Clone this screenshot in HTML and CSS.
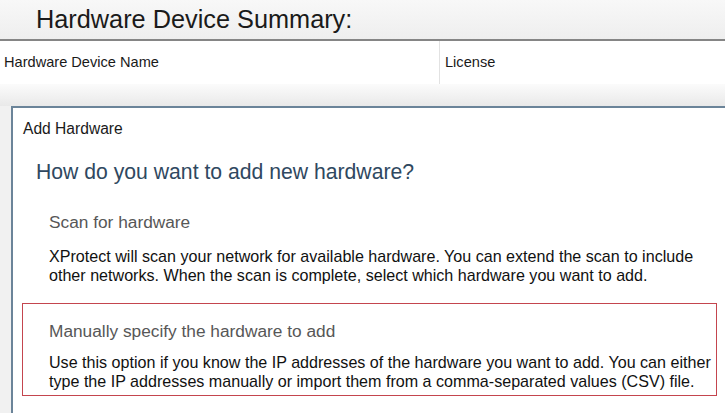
FILE: index.html
```html
<!DOCTYPE html>
<html lang="en">
<head>
    <meta charset="UTF-8">
    <meta name="viewport" content="width=device-width, initial-scale=1.0">
    <title>Hardware Device Summary</title>
    <link rel="stylesheet" href="styles.css">
</head>
<body>

    <!-- Page header -->
    <div class="summary-header">
        <h1 class="summary-title">Hardware Device Summary:</h1>
    </div>

    <!-- Column headers of the (empty) device list -->
    <div class="device-table-head">
        <div class="col col-name">Hardware Device Name</div>
        <div class="col col-license">License</div>
    </div>

    <div class="table-shadow"></div>

    <!-- Add Hardware wizard -->
    <div class="wizard">
        <div class="wizard-title">Add Hardware</div>
        <h2 class="wizard-question">How do you want to add new hardware?</h2>

        <div class="option">
            <h3 class="option-title">Scan for hardware</h3>
            <p class="option-text">XProtect will scan your network for available hardware. You can extend the scan to include other networks. When the scan is complete, select which hardware you want to add.</p>
        </div>

        <div class="option option-selected">
            <h3 class="option-title">Manually specify the hardware to add</h3>
            <p class="option-text">Use this option if you know the IP addresses of the hardware you want to add. You can either type the IP addresses manually or import them from a comma-separated values (CSV) file.</p>
        </div>
    </div>

</body>
</html>
```

FILE: styles.css
```css
/* Base page */
html, body {
    height: 100%;
}

body {
    margin: 0;
    background-color: #f1f1f1;
    font-family: "Liberation Sans", Arial, sans-serif;
    color: #111;
    overflow: hidden;
    display: flex;
    flex-direction: column;
}

/* Top header band */
.summary-header {
    height: 39px;
    background: linear-gradient(#f8f8f8, #eeeeee);
}

.summary-title {
    margin: 0;
    padding-left: 36px;
    font-size: 25.3px;
    font-weight: normal;
    line-height: 38px;
    color: #1a1a1a;
}

/* Device list column headers */
.device-table-head {
    display: grid;
    grid-template-columns: 440px 1fr;
    height: 43px;
    border-top: 2px solid #858585;
    background-color: #fff;
}

.col {
    display: flex;
    align-items: center;
    font-size: 14.6px;
    color: #1a1a1a;
    padding-bottom: 2px;
}

.col-name {
    padding-left: 4px;
    border-right: 1px solid #e2e2e2;
}

.col-license {
    padding-left: 5px;
}

/* Soft shadow under the list */
.table-shadow {
    height: 22px;
    background: linear-gradient(#fbfbfb, #e9e9e9);
}

/* Wizard dialog */
.wizard {
    flex: 1;
    margin-left: 11px;
    background-color: #fff;
    border-top: 2px solid #6b8499;
    border-left: 2px solid #6b8499;
}

.wizard-title {
    padding: 12px 0 0 10px;
    font-size: 15.6px;
    line-height: 18px;
    color: #1a1a1a;
}

.wizard-question {
    margin: 21px 0 0 23px;
    font-size: 21.2px;
    font-weight: normal;
    line-height: 26px;
    color: #2f4860;
}

/* Choice blocks */
.option {
    margin: 25px 8px 0 9px;
    padding: 0 0 0 26px;
    border: 1px solid transparent;
}

.option-selected {
    margin-top: 18px;
    padding-top: 16px;
    padding-bottom: 5px;
    border-color: #c4454e;
}

.option-title {
    margin: 0;
    font-size: 17.3px;
    font-weight: normal;
    line-height: 22px;
    color: #575757;
}

.option-text {
    margin: 14px 0 0 0;
    font-size: 16.1px;
    line-height: 18.5px;
    color: #111;
}

.option-selected .option-text {
    margin-top: 11px;
}
```
